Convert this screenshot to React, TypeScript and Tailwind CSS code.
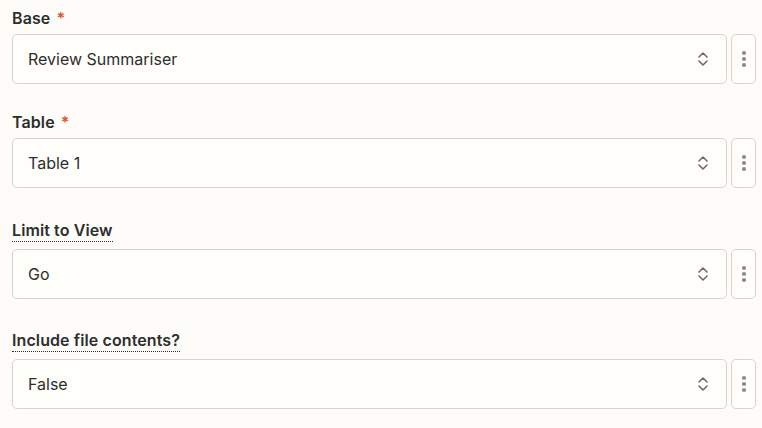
import React from "react";

function Chevrons() {
  return (
    <svg width="12" height="18" viewBox="0 0 12 18" fill="none" stroke="#6b6a66" strokeWidth="1.6" strokeLinecap="round" strokeLinejoin="round">
      <path d="M2 7 L6 3 L10 7" />
      <path d="M2 11 L6 15 L10 11" />
    </svg>
  );
}

function Dots() {
  return (
    <svg width="6" height="18" viewBox="0 0 6 18" fill="#8c8b87">
      <circle cx="3" cy="3" r="2.1" />
      <circle cx="3" cy="9" r="2.1" />
      <circle cx="3" cy="15" r="2.1" />
    </svg>
  );
}

function Field({ label, value, required, dotted, className }: { label: string; value: string; required?: boolean; dotted?: boolean; className?: string }) {
  return (
    <div className={className}>
      <div className="flex">
        <span
          className={
            "text-[16px] leading-[20px] font-semibold text-[#2d2e2e] tracking-[0.1px] " +
            (dotted ? "border-b border-dotted border-[#2d2e2e] pb-[1px]" : "")
          }
        >
          {label}
          {required && <span className="text-[#e2542e] ml-[6px]">*</span>}
        </span>
      </div>
      <div className={"flex gap-[4px] " + (dotted ? "mt-[7px]" : "mt-[6px]")}>
        <div className="flex-1 h-[50px] rounded-[5px] border border-[#d7d4cd] bg-[#fffefb] flex items-center pl-[15px] pr-[17px]">
          <span className="flex-1 text-[16px] text-[#2d2e2e] leading-[20px]">{value}</span>
          <Chevrons />
        </div>
        <div className="w-[25px] h-[50px] rounded-[5px] border border-[#d7d4cd] bg-[#fffefb] flex items-center justify-center">
          <Dots />
        </div>
      </div>
    </div>
  );
}

export default function App() {
  return (
    <div className="w-[762px] h-[428px] bg-[#fdfcf8] pl-[12px] pr-[6px] pt-[8px]" style={{ fontFamily: "Inter, 'Noto Sans', sans-serif" }}>
      <Field label="Base" value="Review Summariser" required />
      <Field label="Table" value="Table 1" required className="mt-[28px]" />
      <Field label="Limit to View" value="Go" dotted className="mt-[32px]" />
      <Field label="Include file contents?" value="False" dotted className="mt-[31px]" />
    </div>
  );
}
